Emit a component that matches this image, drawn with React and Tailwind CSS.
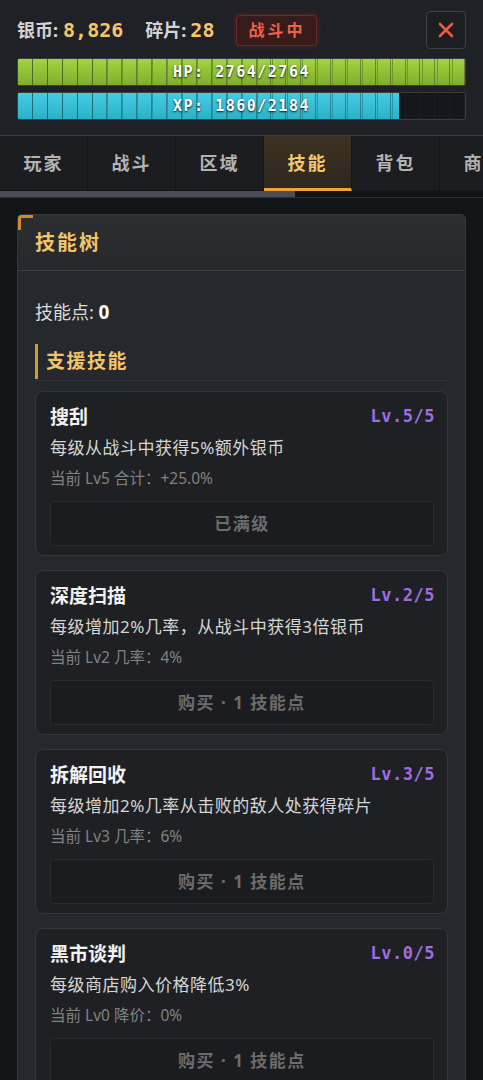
import React from "react";

const font = { fontFamily: '"Noto Sans", "Noto Sans CJK SC", sans-serif' };
const mono = { fontFamily: '"DejaVu Sans Mono", "Noto Sans CJK SC", monospace' };

function Segs({ n, cls }) {
  return (
    <div className="absolute inset-0 flex">
      {Array.from({ length: n }).map((_, i) => (
        <div key={i} className={"flex-1 border-r " + cls} />
      ))}
    </div>
  );
}

function Bar({ label, pct, kind }) {
  const fill =
    kind === "hp"
      ? "bg-gradient-to-b from-[#a3d443] to-[#7fae2c]"
      : "bg-gradient-to-b from-[#45cde3] to-[#2cb0c8]";
  const seg = kind === "hp" ? "border-[#6f9a26]" : "border-[#2797ab]";
  return (
    <div className="relative h-[28px] rounded-[2px] border border-[#3a3d42] bg-[#17181b] overflow-hidden">
      <div className={"absolute left-0 top-0 bottom-0 overflow-hidden " + fill} style={{ width: pct + "%" }}>
        <div className="absolute top-0 bottom-0 left-0 w-[450px]">
          <Segs n={30} cls={seg} />
        </div>
      </div>
      <div className="absolute inset-0 opacity-40">
        <Segs n={30} cls="border-[#222428]" />
      </div>
      <div
        className="relative h-full flex items-center justify-center text-white font-bold text-[15px] tracking-[1.5px] [text-shadow:0_1px_2px_rgba(0,0,0,0.9)]"
        style={mono}
      >
        {label}
      </div>
    </div>
  );
}

function SkillCard({ name, lv, desc, cur, btn }) {
  return (
    <div className="rounded-[8px] border border-[#33363b] bg-[#1e2024] pl-[14px] pr-[12px] pt-[11px] pb-[9px]">
      <div className="flex items-center justify-between h-[28px]">
        <div className="text-[19px] font-bold text-[#f2f2f2]">{name}</div>
        <div className="text-[17px] font-bold text-[#9e6de0] tracking-[0.5px]" style={mono}>
          {lv}
        </div>
      </div>
      <div className="text-[17px] text-[#d6d6d6] leading-[26px] mt-[4px] tracking-[0.5px]">{desc}</div>
      <div className="text-[15.5px] text-[#828282] leading-[24px] mt-[5px]">{cur}</div>
      <div className="mt-[11px] mr-[1px] h-[45px] rounded-[4px] border border-[#2a2c30] bg-[#1b1c20] flex items-center justify-center text-[17px] font-bold text-[#6c6c6c] tracking-[1.5px]">
        {btn}
      </div>
    </div>
  );
}

export default function App() {
  const tabs = ["玩家", "战斗", "区域", "技能", "背包", "商店"];
  return (
    <div className="w-[483px] h-[1080px] overflow-hidden bg-[#131418]" style={font}>
      {/* header */}
      <div className="bg-[#1f2126] px-[17px] pt-[11px] pb-[15px] border-b border-[#3b3e44]">
        <div className="flex items-center h-[38px]">
          <div className="flex items-center text-[18px] font-bold">
            <span className="text-[#d4d4d4]">银币:</span>
            <span className="text-[#f6c66c] ml-[5px] text-[20px]" style={mono}>8,826</span>
            <span className="text-[#d4d4d4] ml-[22px]">碎片:</span>
            <span className="text-[#f6c66c] ml-[4px] text-[20px]" style={mono}>28</span>
          </div>
          <div className="ml-[22px] h-[31px] px-[11px] rounded-[4px] border border-[#6f2a26] bg-[#381c1c] flex items-center text-[16px] font-bold text-[#f0604c] tracking-[3px] shadow-[0_0_6px_rgba(200,60,50,0.3)]">
            战斗中
          </div>
          <div className="ml-auto w-[40px] h-[38px] rounded-[4px] border border-[#3c3f44] bg-[#1c1e22] flex items-center justify-center">
            <svg width="16" height="16" viewBox="0 0 16 16">
              <path d="M2 2 L14 14 M14 2 L2 14" stroke="#ef5a45" strokeWidth="2.6" strokeLinecap="round" />
            </svg>
          </div>
        </div>
        <div className="mt-[9px] flex flex-col gap-[6px]">
          <Bar label="HP: 2764/2764" pct={100} kind="hp" />
          <Bar label="XP: 1860/2184" pct={85.2} kind="xp" />
        </div>
      </div>
      {/* tabs */}
      <div className="flex bg-[#1b1d21] h-[55px] overflow-hidden">
        {tabs.map((t) => {
          const active = t === "技能";
          return (
            <div
              key={t}
              className={
                "w-[88px] shrink-0 flex items-center justify-center text-[18px] font-bold tracking-[2px] border-r border-[#15161a] " +
                (active
                  ? "bg-gradient-to-b from-[#3d3221] to-[#2e281f] text-[#f3c76b] border-b-[3px] border-b-[#f0a432] pt-[3px]"
                  : "text-[#b3b3b3] border-b border-b-[#15161a]")
              }
            >
              {t}
            </div>
          );
        })}
      </div>
      {/* scrollbar */}
      <div className="relative h-[7px] bg-[#121317] border-b border-[#2c2f34]">
        <div className="h-full w-[295px] bg-[#484d55]" />
      </div>
      {/* content */}
      <div className="px-[17px] pt-[16px]">
        <div className="relative rounded-[5px] border border-[#35383d] bg-[#25282d] overflow-hidden">
          <div className="absolute left-0 top-0 w-[15px] h-[3px] bg-[#d18a2a]" />
          <div className="absolute left-0 top-0 w-[3px] h-[15px] bg-[#d18a2a]" />
          <div className="h-[56px] px-[17px] flex items-center bg-gradient-to-b from-[#2c2e32] to-[#26282c] border-b border-[#3c3f44]">
            <span className="text-[20px] font-bold text-[#f2c46a] tracking-[2px]">技能树</span>
          </div>
          <div className="px-[17px] pt-[29px]">
            <div className="text-[18px] text-[#dcdcdc] leading-[24px]">
              技能点: <span className="font-bold text-white text-[19px]">0</span>
            </div>
            <div className="mt-[20px] border-b border-[#2f3237] pb-[1px]">
              <div className="border-l-[3px] border-[#d89a30] pl-[8px] h-[35px] flex items-center text-[19px] font-bold text-[#f2c46a] tracking-[1.5px]">
                支援技能
              </div>
            </div>
            <div className="mt-[10px] flex flex-col gap-[14px]">
              <SkillCard name="搜刮" lv="Lv.5/5" desc="每级从战斗中获得5%额外银币" cur="当前 Lv5 合计：+25.0%" btn="已满级" />
              <SkillCard name="深度扫描" lv="Lv.2/5" desc="每级增加2%几率，从战斗中获得3倍银币" cur="当前 Lv2 几率：4%" btn="购买 · 1 技能点" />
              <SkillCard name="拆解回收" lv="Lv.3/5" desc="每级增加2%几率从击败的敌人处获得碎片" cur="当前 Lv3 几率：6%" btn="购买 · 1 技能点" />
              <SkillCard name="黑市谈判" lv="Lv.0/5" desc="每级商店购入价格降低3%" cur="当前 Lv0 降价：0%" btn="购买 · 1 技能点" />
            </div>
          </div>
        </div>
      </div>
    </div>
  );
}
